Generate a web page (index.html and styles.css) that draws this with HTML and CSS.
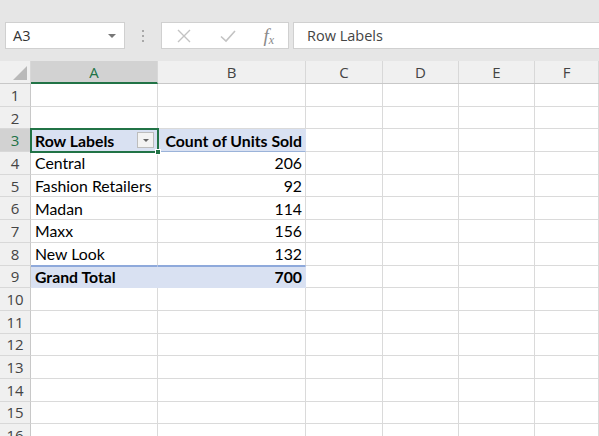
FILE: index.html
```html
<!DOCTYPE html>
<html>
<head>
<meta charset="utf-8">
<link rel="stylesheet" href="styles.css">
</head>
<body>
<div class="toolbar">
  <div class="namebox"><span>A3</span><span class="caret"></span></div>
  <div class="dots"><i></i><i></i><i></i></div>
  <div class="fbtns">
    <svg class="ic" width="16" height="16" viewBox="0 0 16 16"><path d="M2 2L14 14M14 2L2 14" stroke="#c3c3c3" stroke-width="1.4" fill="none"/></svg>
    <svg class="ic" width="18" height="16" viewBox="0 0 18 16"><path d="M2 8.5L7 13L16 3" stroke="#c3c3c3" stroke-width="1.6" fill="none"/></svg>
    <span class="fx"><i>f</i><sub>x</sub></span>
  </div>
  <div class="finput">Row Labels</div>
</div>
<div class="sheet">
  <div class="colhdr">
    <div class="corner"><svg width="14" height="14" viewBox="0 0 14 14"><path d="M14 0V14H0Z" fill="#b9b9b9"/></svg></div>
    <div class="ch sel">A</div><div class="ch">B</div><div class="ch">C</div><div class="ch">D</div><div class="ch">E</div><div class="ch">F</div>
  </div>
  <div class="grid">
    <div class="rh">1</div><div class="c"></div><div class="c"></div><div class="c"></div><div class="c"></div><div class="c"></div><div class="c"></div>
    <div class="rh">2</div><div class="c"></div><div class="c"></div><div class="c"></div><div class="c"></div><div class="c"></div><div class="c"></div>
    <div class="rh selr">3</div><div class="c hd active"><b>Row Labels</b><span class="filter"><span class="tri"></span></span><span class="handle"></span></div><div class="c hd r"><b>Count of Units Sold</b></div><div class="c"></div><div class="c"></div><div class="c"></div><div class="c"></div>
    <div class="rh">4</div><div class="c">Central</div><div class="c r">206</div><div class="c"></div><div class="c"></div><div class="c"></div><div class="c"></div>
    <div class="rh">5</div><div class="c">Fashion Retailers</div><div class="c r">92</div><div class="c"></div><div class="c"></div><div class="c"></div><div class="c"></div>
    <div class="rh">6</div><div class="c">Madan</div><div class="c r">114</div><div class="c"></div><div class="c"></div><div class="c"></div><div class="c"></div>
    <div class="rh">7</div><div class="c">Maxx</div><div class="c r">156</div><div class="c"></div><div class="c"></div><div class="c"></div><div class="c"></div>
    <div class="rh">8</div><div class="c pre">New Look</div><div class="c r pre">132</div><div class="c"></div><div class="c"></div><div class="c"></div><div class="c"></div>
    <div class="rh">9</div><div class="c tot"><b>Grand Total</b></div><div class="c tot r"><b>700</b></div><div class="c"></div><div class="c"></div><div class="c"></div><div class="c"></div>
    <div class="rh">10</div><div class="c"></div><div class="c"></div><div class="c"></div><div class="c"></div><div class="c"></div><div class="c"></div>
    <div class="rh">11</div><div class="c"></div><div class="c"></div><div class="c"></div><div class="c"></div><div class="c"></div><div class="c"></div>
    <div class="rh">12</div><div class="c"></div><div class="c"></div><div class="c"></div><div class="c"></div><div class="c"></div><div class="c"></div>
    <div class="rh">13</div><div class="c"></div><div class="c"></div><div class="c"></div><div class="c"></div><div class="c"></div><div class="c"></div>
    <div class="rh">14</div><div class="c"></div><div class="c"></div><div class="c"></div><div class="c"></div><div class="c"></div><div class="c"></div>
    <div class="rh">15</div><div class="c"></div><div class="c"></div><div class="c"></div><div class="c"></div><div class="c"></div><div class="c"></div>
    <div class="rh">16</div><div class="c"></div><div class="c"></div><div class="c"></div><div class="c"></div><div class="c"></div><div class="c"></div>
  </div>
</div>
</body>
</html>
```
FILE: styles.css
```css
* { box-sizing: border-box; }
html, body { margin: 0; padding: 0; }
body { width: 599px; height: 436px; overflow: hidden; background: #fff; font-family: "Lato", "Open Sans", sans-serif; }

.toolbar { height: 61px; background: #e6e6e6; display: flex; align-items: flex-start; padding: 22px 0 0 5px; }
.namebox { width: 120px; height: 27px; background: #fff; border: 1px solid #d0d0d0; display: flex; align-items: center; justify-content: space-between; padding: 0 8px 0 7px; font-family: "Open Sans", sans-serif; font-size: 14.5px; color: #333; }
.caret { width: 0; height: 0; border-left: 4px solid transparent; border-right: 4px solid transparent; border-top: 4px solid #777; }
.dots { width: 36px; height: 27px; display: flex; flex-direction: column; align-items: center; justify-content: center; gap: 3px; }
.dots i { width: 2px; height: 2px; background: #a8a8a8; display: block; }
.fbtns { width: 128px; height: 27px; background: #fff; border: 1px solid #d0d0d0; display: flex; align-items: center; justify-content: space-between; padding: 0 14px 0 14px; }
.fx { font-family: "Liberation Serif", serif; font-style: italic; color: #8a8a8a; font-size: 19px; line-height: 1; }
.fx i { font-style: italic; }
.fx sub { font-size: 12px; vertical-align: -2px; }
.finput { margin-left: 4px; flex: 1; height: 27px; background: #fff; border: 1px solid #d0d0d0; border-right: none; display: flex; align-items: center; padding-left: 13px; font-family: "Open Sans", sans-serif; font-size: 14.5px; color: #444; }

.colhdr { display: grid; grid-template-columns: 31px 127px 148px 77px 76px 76px 64px; height: 23px; background: #f0f0f0; border-bottom: 1px solid #c8c8c8; }
.corner { display: flex; align-items: flex-end; justify-content: flex-end; padding: 0 3px 3px 0; border-right: 1px solid #d8d8d8; }
.ch { display: flex; align-items: center; justify-content: center; font-family: "Open Sans", sans-serif; font-size: 15px; color: #444; border-right: 1px solid #d8d8d8; }
.ch.sel { background: #d2d2d2; color: #217346; border-bottom: 2px solid #217346; margin-bottom: -1px; }

.grid { display: grid; grid-template-columns: 31px 127px 148px 77px 76px 76px 64px; grid-auto-rows: 22.7px; }
.rh { background: #f0f0f0; border-right: 1px solid #c8c8c8; border-bottom: 1px solid #d8d8d8; display: flex; align-items: center; justify-content: center; font-family: "Open Sans", sans-serif; font-size: 15px; color: #444; }
.rh.selr { background: #d2d2d2; color: #217346; }
.c { border-right: 1px solid #dadada; border-bottom: 1px solid #dadada; font-size: 15.8px; color: #000; display: flex; align-items: center; padding: 0 3px 0 4px; white-space: nowrap; position: relative; }
.c.r { justify-content: flex-end; }
.c b { font-weight: 700; }
.c.hd { background: #d9e1f2; border-bottom-color: #9bb3d9; border-right-color: #d9e1f2; }
.c.tot { background: #d9e1f2; border-top: 1px solid #8ea9db; border-bottom-color: #d9e1f2; border-right-color: #d9e1f2; }
.c.pre { border-bottom-color: #8ea9db; }
.active { outline: 2px solid #217346; outline-offset: -1px; z-index: 2; }
.filter { position: absolute; right: 3px; top: 3px; width: 17px; height: 16px; background: #f3f3f3; border: 1px solid #bdbdbd; display: flex; align-items: center; justify-content: center; }
.tri { width: 0; height: 0; border-left: 3px solid transparent; border-right: 3px solid transparent; border-top: 3px solid #666; }
.handle { position: absolute; right: -4px; bottom: -4px; width: 6px; height: 6px; background: #217346; border: 1px solid #fff; }
```
